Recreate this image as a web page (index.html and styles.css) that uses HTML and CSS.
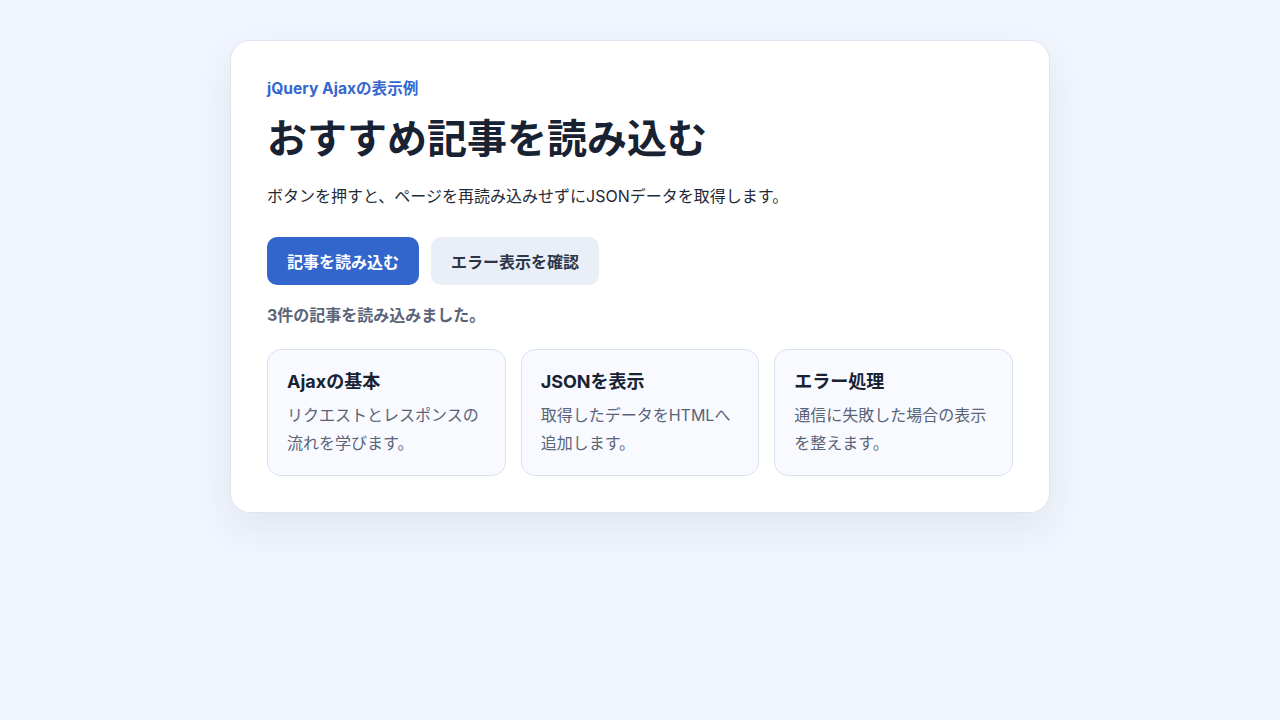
FILE: index.html
```html
<!DOCTYPE html>
<html lang="ja">
<head>
<meta charset="utf-8">
<title>おすすめ記事を読み込む</title>
<link rel="stylesheet" href="styles.css">
</head>
<body>
<main class="panel">
  <p class="eyebrow">jQuery Ajaxの表示例</p>
  <h1 class="title">おすすめ記事を読み込む</h1>
  <p class="lead">ボタンを押すと、ページを再読み込みせずにJSONデータを取得します。</p>
  <div class="actions">
    <button class="btn btn-primary" type="button">記事を読み込む</button>
    <button class="btn btn-secondary" type="button">エラー表示を確認</button>
  </div>
  <p class="status">3件の記事を読み込みました。</p>
  <div class="grid">
    <article class="item">
      <h2 class="item-title">Ajaxの基本</h2>
      <p class="item-text">リクエストとレスポンスの流れを学びます。</p>
    </article>
    <article class="item">
      <h2 class="item-title">JSONを表示</h2>
      <p class="item-text">取得したデータをHTMLへ追加します。</p>
    </article>
    <article class="item">
      <h2 class="item-title">エラー処理</h2>
      <p class="item-text">通信に失敗した場合の表示を整えます。</p>
    </article>
  </div>
</main>
</body>
</html>
```
FILE: styles.css
```css
* { box-sizing: border-box; }
html, body { margin: 0; padding: 0; }
body {
  background: #f1f5fd;
  font-family: Inter, "Noto Sans CJK JP", sans-serif;
  color: #1a2233;
  padding: 40px 0;
}
.panel {
  width: 820px;
  margin: 0 auto;
  background: #ffffff;
  border: 1px solid #dfe4ee;
  border-radius: 20px;
  padding: 36px;
  box-shadow: 0 16px 40px rgba(30, 50, 90, 0.08);
}
.eyebrow {
  margin: 0;
  font-size: 15.6px;
  line-height: 24px;
  font-weight: 700;
  color: #3567cf;
}
.title {
  margin: 12px 0 0;
  font-size: 40px;
  line-height: 52px;
  font-weight: 700;
  color: #182233;
}
.lead {
  margin: 19px 0 0;
  font-size: 16px;
  line-height: 24px;
  color: #1f2937;
}
.actions {
  display: flex;
  gap: 12px;
  margin-top: 29px;
}
.btn {
  height: 48px;
  border: none;
  border-radius: 10px;
  padding: 0 20px;
  font-family: inherit;
  font-size: 16px;
  font-weight: 700;
}
.btn-primary {
  background: #3366cc;
  color: #ffffff;
}
.btn-secondary {
  background: #e9eef7;
  color: #2c3648;
}
.status {
  margin: 18px 0 0;
  font-size: 16px;
  line-height: 24px;
  font-weight: 700;
  color: #5a6478;
}
.grid {
  display: grid;
  grid-template-columns: repeat(3, 1fr);
  gap: 15px;
  margin-top: 22px;
}
.item {
  background: #f8faff;
  border: 1px solid #d7e1ef;
  border-radius: 14px;
  padding: 20px 19px 18px;
}
.item-title {
  margin: 0;
  font-size: 18px;
  line-height: 24px;
  font-weight: 700;
  color: #182233;
}
.item-text {
  margin: 7px 0 0;
  font-size: 16px;
  line-height: 28px;
  color: #5a6478;
}
```
